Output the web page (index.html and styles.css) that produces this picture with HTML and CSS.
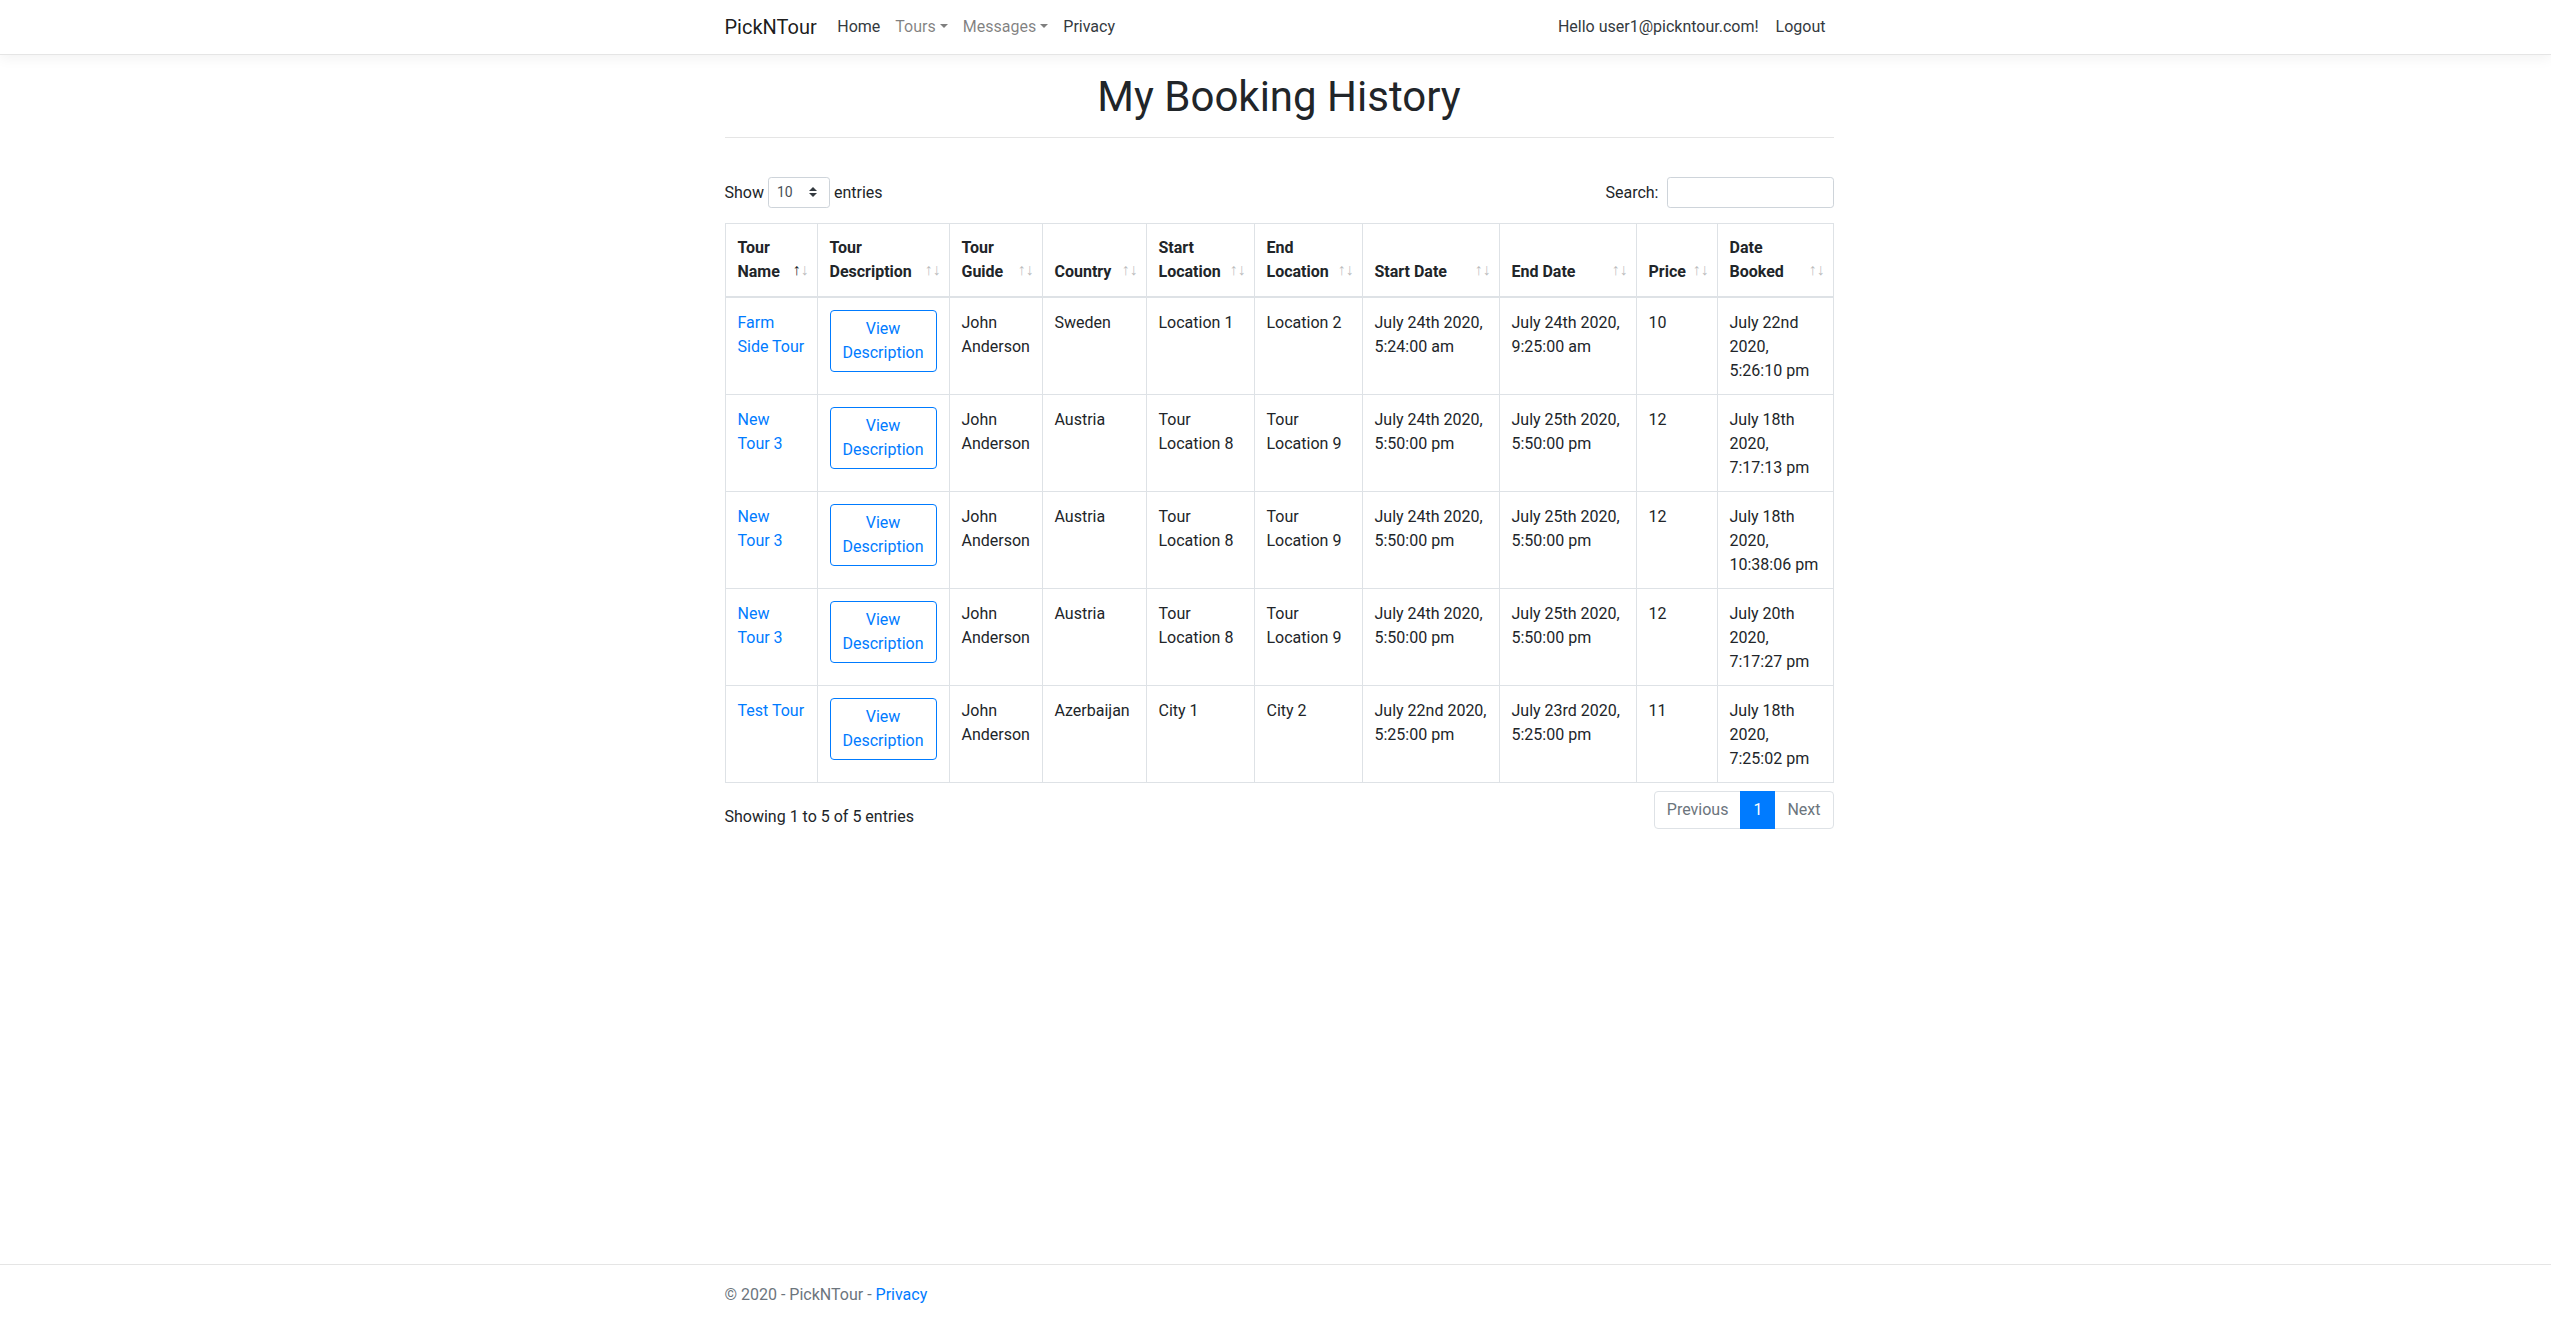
FILE: index.html
```html
<!DOCTYPE html>
<html lang="en">
<head>
<meta charset="utf-8">
<title>My Booking History - PickNTour</title>
<link rel="stylesheet" href="styles.css">
</head>
<body>
<header>
  <nav class="navbar">
    <div class="container nav-inner">
      <a class="brand" href="#">PickNTour</a>
      <ul class="nav nav-main">
        <li><a class="nav-link text-dark" href="#">Home</a></li>
        <li><a class="nav-link dropdown-toggle" href="#">Tours</a></li>
        <li><a class="nav-link dropdown-toggle" href="#">Messages</a></li>
        <li><a class="nav-link text-dark" href="#">Privacy</a></li>
      </ul>
      <ul class="nav">
        <li><a class="nav-link text-dark" href="#">Hello user1@pickntour.com!</a></li>
        <li><button class="nav-link btn-link text-dark" type="button">Logout</button></li>
      </ul>
    </div>
  </nav>
</header>

<main class="container">
  <h1 class="title">My Booking History</h1>
  <hr class="rule">

  <div class="toolbar">
    <label class="dt-label">Show <span class="select-wrap"><select class="dt-select"><option>10</option><option>25</option><option>50</option><option>100</option></select><svg class="select-arrow" viewBox="0 0 4 5"><path fill="#343a40" d="M2 0L0 2h4zm0 5L0 3h4z"/></svg></span> entries</label>
    <label class="dt-label">Search:<input class="dt-input" type="search"></label>
  </div>

  <table class="dt-table">
    <colgroup>
      <col class="c-name"><col class="c-desc"><col class="c-guide"><col class="c-country"><col class="c-start"><col class="c-end"><col class="c-sdate"><col class="c-edate"><col class="c-price"><col class="c-booked">
    </colgroup>
    <thead>
      <tr>
        <th class="sorting sorting-asc">Tour<br>Name</th>
        <th class="sorting">Tour<br>Description</th>
        <th class="sorting">Tour<br>Guide</th>
        <th class="sorting">Country</th>
        <th class="sorting">Start<br>Location</th>
        <th class="sorting">End<br>Location</th>
        <th class="sorting">Start Date</th>
        <th class="sorting">End Date</th>
        <th class="sorting">Price</th>
        <th class="sorting">Date<br>Booked</th>
      </tr>
    </thead>
    <tbody>
      <tr>
        <td><a href="#">Farm<br>Side Tour</a></td>
        <td><button class="btn-outline" type="button">View<br>Description</button></td>
        <td>John<br>Anderson</td>
        <td>Sweden</td>
        <td>Location 1</td>
        <td>Location 2</td>
        <td>July 24th 2020,<br>5:24:00 am</td>
        <td>July 24th 2020,<br>9:25:00 am</td>
        <td>10</td>
        <td>July 22nd<br>2020,<br>5:26:10 pm</td>
      </tr>
      <tr>
        <td><a href="#">New<br>Tour 3</a></td>
        <td><button class="btn-outline" type="button">View<br>Description</button></td>
        <td>John<br>Anderson</td>
        <td>Austria</td>
        <td>Tour<br>Location 8</td>
        <td>Tour<br>Location 9</td>
        <td>July 24th 2020,<br>5:50:00 pm</td>
        <td>July 25th 2020,<br>5:50:00 pm</td>
        <td>12</td>
        <td>July 18th<br>2020,<br>7:17:13 pm</td>
      </tr>
      <tr>
        <td><a href="#">New<br>Tour 3</a></td>
        <td><button class="btn-outline" type="button">View<br>Description</button></td>
        <td>John<br>Anderson</td>
        <td>Austria</td>
        <td>Tour<br>Location 8</td>
        <td>Tour<br>Location 9</td>
        <td>July 24th 2020,<br>5:50:00 pm</td>
        <td>July 25th 2020,<br>5:50:00 pm</td>
        <td>12</td>
        <td>July 18th<br>2020,<br>10:38:06 pm</td>
      </tr>
      <tr>
        <td><a href="#">New<br>Tour 3</a></td>
        <td><button class="btn-outline" type="button">View<br>Description</button></td>
        <td>John<br>Anderson</td>
        <td>Austria</td>
        <td>Tour<br>Location 8</td>
        <td>Tour<br>Location 9</td>
        <td>July 24th 2020,<br>5:50:00 pm</td>
        <td>July 25th 2020,<br>5:50:00 pm</td>
        <td>12</td>
        <td>July 20th<br>2020,<br>7:17:27 pm</td>
      </tr>
      <tr>
        <td><a href="#">Test Tour</a></td>
        <td><button class="btn-outline" type="button">View<br>Description</button></td>
        <td>John<br>Anderson</td>
        <td>Azerbaijan</td>
        <td>City 1</td>
        <td>City 2</td>
        <td>July 22nd 2020,<br>5:25:00 pm</td>
        <td>July 23rd 2020,<br>5:25:00 pm</td>
        <td>11</td>
        <td>July 18th<br>2020,<br>7:25:02 pm</td>
      </tr>
    </tbody>
  </table>

  <div class="dt-footer">
    <div class="dt-info">Showing 1 to 5 of 5 entries</div>
    <ul class="pagination">
      <li class="page-item disabled"><span class="page-link">Previous</span></li>
      <li class="page-item active"><span class="page-link">1</span></li>
      <li class="page-item disabled"><span class="page-link">Next</span></li>
    </ul>
  </div>
</main>

<footer class="footer">
  <div class="container">&copy; 2020 - PickNTour - <a href="#">Privacy</a></div>
</footer>
</body>
</html>
```

FILE: styles.css
```css
* { box-sizing: border-box; }

html, body { height: 100%; }

body {
  margin: 0;
  min-height: 100vh;
  display: flex;
  flex-direction: column;
  font-family: Roboto, "Liberation Sans", Arial, sans-serif;
  font-size: 16px;
  line-height: 1.5;
  color: #212529;
  background: #fff;
}

a { color: #007bff; text-decoration: none; }

.container {
  width: 100%;
  max-width: 1140px;
  margin: 0 auto;
  padding: 0 12px 0 19px;
}

/* navbar */
.navbar {
  background: #fff;
  border-bottom: 1px solid #e5e5e5;
  box-shadow: 0 .25rem .75rem rgba(0, 0, 0, .05);
  padding: 7px 16px;
  margin-bottom: 16px;
}

.nav-inner { display: flex; align-items: center; }

.brand {
  font-size: 20px;
  line-height: 30px;
  padding: 5px 0;
  margin-right: 13px;
  color: rgba(0, 0, 0, .9);
  white-space: nowrap;
}

.nav {
  display: flex;
  list-style: none;
  margin: 0;
  padding: 0;
}

.nav-main { flex: 1; }

.nav-link {
  display: block;
  padding: 8px 8px;
  color: rgba(0, 0, 0, .5);
  line-height: 24px;
  white-space: nowrap;
}

.nav-main .nav-link { padding: 8px 7.5px; }

.text-dark { color: #343a40; }

.dropdown-toggle::after {
  content: "";
  display: inline-block;
  margin-left: .255em;
  vertical-align: .255em;
  border-top: .3em solid;
  border-right: .3em solid transparent;
  border-left: .3em solid transparent;
  border-bottom: 0;
}

.btn-link {
  background: none;
  border: 0;
  border-left: 1px solid transparent;
  font: inherit;
  line-height: 24px;
  cursor: pointer;
}

/* heading */
.title {
  font-size: 42px;
  font-weight: 400;
  line-height: 48px;
  text-align: center;
  margin: 2px 0 8px;
}

.rule {
  border: 0;
  border-top: 1px solid rgba(0, 0, 0, .1);
  margin: 16px 0 39px;
}

/* datatables toolbar */
.toolbar {
  display: flex;
  justify-content: space-between;
  align-items: center;
  height: 31px;
}

.dt-label {
  display: flex;
  align-items: center;
  white-space: pre;
}

.select-wrap { position: relative; display: inline-block; }

.dt-select {
  appearance: none;
  -webkit-appearance: none;
  width: 62px;
  height: 31px;
  padding: 4px 28px 4px 8px;
  font-family: inherit;
  font-size: 14px;
  line-height: 1.5;
  color: #495057;
  background: #fff;
  border: 1px solid #ced4da;
  border-radius: .2rem;
  display: block;
}

.select-arrow {
  position: absolute;
  right: 13px;
  top: 10px;
  width: 8px;
  height: 10px;
  pointer-events: none;
}

.dt-input {
  width: 167px;
  height: 31px;
  margin-left: 8px;
  padding: 4px 8px;
  font-family: inherit;
  font-size: 14px;
  border: 1px solid #ced4da;
  border-radius: .2rem;
  background: #fff;
}

/* table */
.dt-table {
  width: 100%;
  table-layout: fixed;
  border-collapse: collapse;
  border: 1px solid #dee2e6;
  margin-top: 15px;
}

.c-name { width: 92px; }
.c-desc { width: 132px; }
.c-guide { width: 93px; }
.c-country { width: 104px; }
.c-start { width: 108px; }
.c-end { width: 108px; }
.c-sdate { width: 137px; }
.c-edate { width: 137px; }
.c-price { width: 81px; }

.dt-table th,
.dt-table td {
  border: 1px solid #dee2e6;
  padding: 12px;
  text-align: left;
  white-space: nowrap;
  line-height: 24px;
}

.dt-table td { vertical-align: top; padding-top: 13px; padding-bottom: 11px; }

.dt-table th {
  vertical-align: bottom;
  font-weight: 700;
  border-bottom-width: 2px;
  padding-right: 30px;
  position: relative;
}

.sorting::before,
.sorting::after {
  position: absolute;
  bottom: .9em;
  display: block;
  opacity: .3;
  font-family: "Liberation Sans", Arial, sans-serif;
  font-weight: 400;
}

.sorting::before { right: 1em; content: "\2191"; }
.sorting::after { right: .5em; content: "\2193"; }
.sorting-asc::before { opacity: 1; }

.btn-outline {
  display: inline-block;
  margin-top: -1px;
  font-family: inherit;
  font-size: 16px;
  line-height: 1.5;
  padding: 6px 12px;
  color: #007bff;
  background: transparent;
  border: 1px solid #007bff;
  border-radius: .25rem;
  text-align: center;
  vertical-align: top;
  cursor: pointer;
}

/* datatables footer */
.dt-footer {
  display: flex;
  justify-content: space-between;
  align-items: flex-start;
  margin-top: 6px;
}

.dt-info { padding-top: 16px; white-space: nowrap; }

.pagination {
  display: flex;
  list-style: none;
  margin: 2px 0 0;
  padding: 0;
}

.page-link {
  display: block;
  padding: 8px 12px;
  line-height: 20px;
  margin-left: -1px;
  border: 1px solid #dee2e6;
  background: #fff;
  color: #6c757d;
}

.page-item:first-child .page-link {
  margin-left: 0;
  border-radius: .25rem 0 0 .25rem;
}

.page-item:last-child .page-link { border-radius: 0 .25rem .25rem 0; }

.page-item.active .page-link {
  position: relative;
  z-index: 1;
  color: #fff;
  background: #007bff;
  border-color: #007bff;
}

/* footer */
main { flex: 1; }

.footer {
  border-top: 1px solid #e5e5e5;
  padding-top: 2px;
  line-height: 56px;
  color: #6c757d;
  white-space: nowrap;
}
```
